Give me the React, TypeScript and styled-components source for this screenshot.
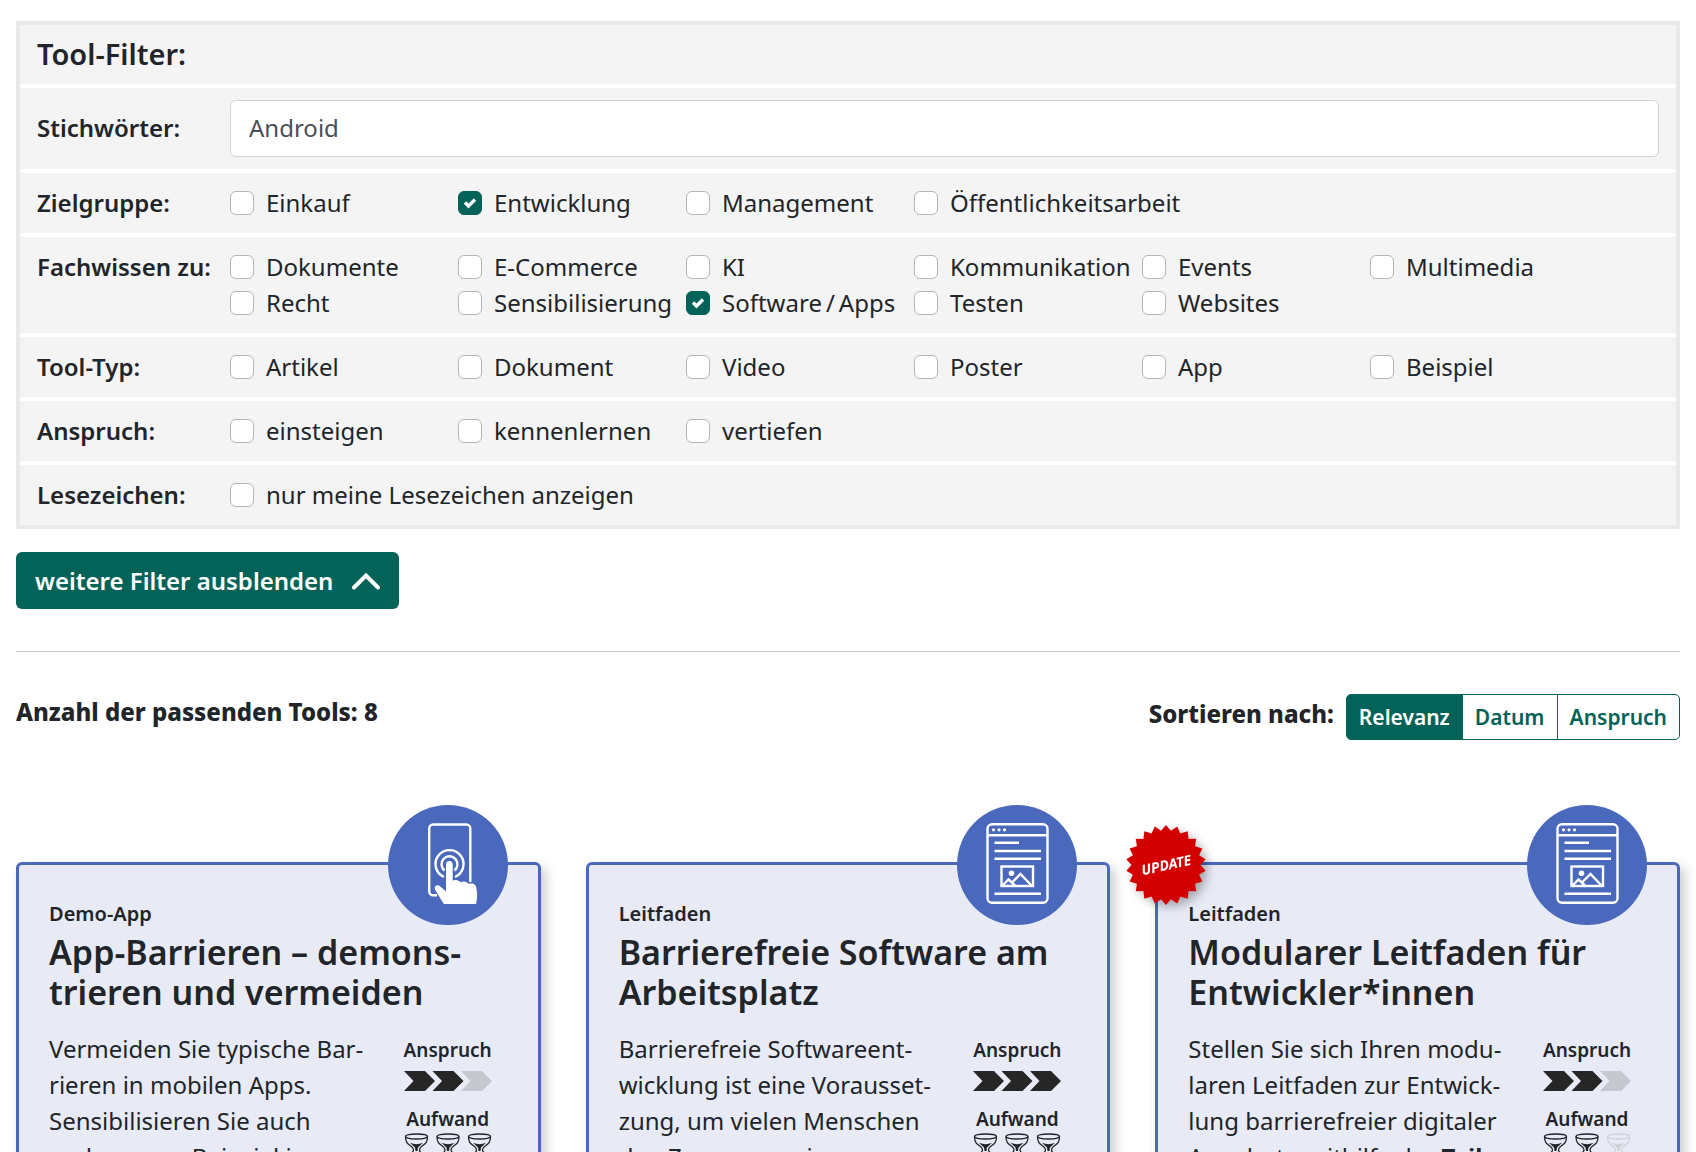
import React, { useState } from "react";
import styled, { createGlobalStyle } from "styled-components";

const green = "#046358";
const blue = "#4a69bd";
const ink = "#212529";

const GlobalStyle = createGlobalStyle`
  *, *::before, *::after { box-sizing: border-box; }
  body {
    margin: 0;
    background: #fff;
    color: ${ink};
    font-family: "Noto Sans", "Open Sans", sans-serif;
    font-size: 24px;
    line-height: 36px;
  }
  h2, h3, p { margin: 0; }
`;

const Page = styled.main`
  height: 100vh;
  overflow: hidden;
  padding: 21px 16px 0;
`;

const FilterPanel = styled.form`
  display: flex;
  flex-direction: column;
  gap: 4px;
  border: 4px solid #e9e9e9;
  background: #fff;
`;

const PanelTitle = styled.h2`
  padding: 11px 17px 12px;
  background: #f4f4f4;
  font-size: 29px;
  font-weight: 600;
`;

const FilterRow = styled.div`
  display: flex;
  align-items: flex-start;
  padding: 12px 17px;
  background: #f4f4f4;
`;

const RowLabel = styled.label`
  flex: 0 0 193px;
  align-self: center;
  padding-bottom: 2px;
  font-weight: 600;
`;

const GroupLabel = styled.span`
  flex: 0 0 193px;
  font-weight: 600;
  white-space: nowrap;
`;

const KeywordInput = styled.input`
  flex: 1;
  min-width: 0;
  height: 57px;
  padding: 0 18px 2px;
  border: 1px solid #ced4da;
  border-radius: 6px;
  background: #fff;
  color: #495057;
  font: inherit;
`;

const Options = styled.div`
  flex: 1;
  display: grid;
  grid-template-columns: repeat(auto-fill, 228px);
`;

const Option = styled.label<{ $wide?: boolean }>`
  display: flex;
  align-items: center;
  gap: 12px;
  white-space: nowrap;
  grid-column: ${(p) => (p.$wide ? "span 2" : "auto")};
`;

const CheckWrap = styled.span`
  display: grid;
  flex: none;
  & > * { grid-area: 1 / 1; }
  & > svg { pointer-events: none; place-self: center; }
`;

const CheckBox = styled.input`
  appearance: none;
  width: 24px;
  height: 24px;
  margin: 0;
  border: 1px solid #adb5bd;
  border-radius: 6px;
  background: #fff;
  &:checked {
    border-color: ${green};
    background: ${green};
  }
`;

const ToggleButton = styled.button`
  display: flex;
  align-items: center;
  gap: 19px;
  height: 57px;
  margin-top: 23px;
  padding: 0 19px;
  border: 0;
  border-radius: 6px;
  background: ${green};
  color: #fff;
  font: inherit;
  font-weight: 600;
`;

const Divider = styled.hr`
  height: 1px;
  margin: 42px 0;
  border: 0;
  background: #c4c6c8;
`;

const ResultBar = styled.div`
  display: flex;
  align-items: flex-start;
  justify-content: space-between;
  font-weight: 800;
`;

const SortArea = styled.div`
  display: flex;
  gap: 12px;
  line-height: 40px;
`;

const SortGroup = styled.div`
  display: flex;
`;

const SortButton = styled.button<{ $active: boolean }>`
  height: 46px;
  padding: 0 12px;
  border: 1px solid ${green};
  background: ${(p) => (p.$active ? green : "#fff")};
  color: ${(p) => (p.$active ? "#fff" : green)};
  font: inherit;
  font-size: 21px;
  font-weight: 600;
  & + & { margin-left: -1px; }
  &:first-child { border-radius: 5px 0 0 5px; }
  &:last-child { border-radius: 0 5px 5px 0; }
`;

const Cards = styled.div`
  display: grid;
  grid-template-columns: repeat(3, 1fr);
  gap: 45px;
  margin-top: 122px;
`;

const Card = styled.article`
  position: relative;
  min-height: 480px;
  padding: 30px;
  border: 3px solid ${blue};
  border-radius: 6px;
  background: #e8ebf6;
  box-shadow: 5px 5px 12px rgba(0, 0, 0, 0.2);
`;

const IconDisc = styled.div`
  position: absolute;
  top: -60px;
  right: 30px;
  width: 120px;
  height: 120px;
  border-radius: 50%;
  background: ${blue};
`;

const UpdateBadge = styled.div`
  position: absolute;
  top: -40px;
  left: -32px;
  display: grid;
  place-items: center;
  width: 80px;
  height: 80px;
  color: #fff;
  font-size: 14px;
  font-weight: 700;
  font-style: italic;
  filter: drop-shadow(4px 4px 5px rgba(0, 0, 0, 0.3));
  & > * { grid-area: 1 / 1; }
  & > span { transform: rotate(-12deg); }
`;

const Kind = styled.p`
  padding: 4px 0 3px;
  font-size: 20px;
  font-weight: 600;
  line-height: 30px;
`;

const CardTitle = styled.h3`
  margin-bottom: 19px;
  font-size: 34px;
  font-weight: 600;
  line-height: 40px;
`;

const CardBody = styled.div`
  display: flex;
  justify-content: space-between;
`;

const Teaser = styled.p`
  white-space: nowrap;
`;

const Ratings = styled.div`
  display: flex;
  flex-direction: column;
  align-items: center;
  width: 88px;
  margin-right: 16px;
  padding-top: 5px;
  font-size: 19px;
  font-weight: 600;
  line-height: 28px;
`;

const ChevronRow = styled.div`
  display: flex;
  padding: 7px 0 14px;
`;

function Check() {
  return (
    <svg width="14" height="12" viewBox="0 0 14 12" fill="none" stroke="#fff" strokeWidth="3.4">
      <path d="M2 5.5 5.5 9 12 2.5" />
    </svg>
  );
}

function ChevronUp() {
  return (
    <svg width="28" height="18" viewBox="0 0 28 18" fill="none" stroke="#fff" strokeWidth="4" strokeLinecap="round">
      <path d="M2 15.5 14 3.5 26 15.5" />
    </svg>
  );
}

function PhoneIcon() {
  return (
    <svg width="120" height="120" viewBox="0 0 120 120" fill="none" stroke="#fff" strokeWidth="2.4">
      <path d="M49 90.3H45.2a4 4 0 0 1-4-4V23.5a4 4 0 0 1 4-4H78.3a4 4 0 0 1 4 4V77" />
      <path d="M56 72A14 14 0 1 1 67 72" />
      <path d="M56.5 65.5A8 8 0 1 1 66.5 65.5" />
      <path fill="#fff" stroke="none" d="M55.8 99 47.5 85.5C45 81.5 49 78.8 52 81.2L58 86.5V59.5C58 54.9 64.7 54.9 64.7 59.5V75.5C67.5 74.5 70.5 75 72.5 77.2 75.5 76 78.5 76.5 80.5 78.8 85 77.5 88.3 79.5 88.3 83 89.6 88.5 89.3 94 88 99Z" />
    </svg>
  );
}

function DocumentIcon() {
  return (
    <svg width="120" height="120" viewBox="0 0 120 120" fill="none" stroke="#fff" strokeWidth="2.4">
      <rect x="30.5" y="19.3" width="60" height="78.5" rx="4.5" />
      <path d="M30 30.3H91M37.5 37.8H62M37.5 46H84M37.5 53.7H84M37.5 88.8H84" />
      <rect x="44.5" y="61.5" width="31.5" height="19.5" />
      <path d="M46 80 51.5 74.5 58 80.5M55 77.5 63.5 69 74.5 80.5" />
      <g fill="#fff" stroke="none">
        <circle cx="54.5" cy="68.3" r="2.8" />
        <circle cx="36.5" cy="24.8" r="1.6" />
        <circle cx="42" cy="24.8" r="1.6" />
        <circle cx="47.5" cy="24.8" r="1.6" />
      </g>
    </svg>
  );
}

function Seal() {
  const points = Array.from({ length: 44 }, (_, i) => {
    const r = i % 2 ? 34.5 : 40;
    const a = (i * Math.PI) / 22 - Math.PI / 2;
    return `${40 + r * Math.cos(a)},${40 + r * Math.sin(a)}`;
  }).join(" ");
  return (
    <svg width="80" height="80" viewBox="0 0 80 80">
      <polygon points={points} fill="#d30000" />
    </svg>
  );
}

function Chevrons({ level }: { level: number }) {
  return (
    <svg width="88" height="20" viewBox="0 0 88 20" role="img" aria-label={`${level} / 3`}>
      {[0, 1, 2].map((i) => (
        <path key={i} transform={`translate(${i * 28.5} 0)`} d="M0 0H21L31 10 21 20H0L9.5 10Z" fill={i < level ? "#262626" : "#c5c8cf"} />
      ))}
    </svg>
  );
}

function Hourglasses({ level }: { level: number }) {
  return (
    <svg width="88" height="36" viewBox="0 0 88 36" role="img" aria-label={`${level} / 3`}>
      {[0, 1, 2].map((i) => {
        const color = i < level ? ink : "#cfd1d8";
        return (
          <g key={i} transform={`translate(${i * 31.5} 0)`} fill="none" stroke={color} strokeWidth="1.3">
            <ellipse cx="12.5" cy="3.5" rx="11" ry="2.5" />
            <path d="M1.5 3.5C1.5 10 4 11 7.5 13.500 9.500 15 9.500 16 9.5 17.5S1.5 24 1.5 31.5M23.5 3.5C23.5 10 21 11 17.5 13.500 15.500 15 15.500 16 15.5 17.5S23.5 24 23.5 31.5" />
            <path d="M6 9.8Q12.500 12.500 19 9.8L14 14.500 13.500 18H11.5L11 14.500Z" fill={color} stroke="none" />
            <ellipse cx="12.5" cy="31.5" rx="11" ry="2.5" />
          </g>
        );
      })}
    </svg>
  );
}

const groups: { name: string; options: string[] }[] = [
  { name: "Zielgruppe:", options: ["Einkauf", "Entwicklung", "Management", "Öffentlichkeitsarbeit"] },
  {
    name: "Fachwissen zu:",
    options: ["Dokumente", "E-Commerce", "KI", "Kommunikation", "Events", "Multimedia", "Recht", "Sensibilisierung", "Software\u2009/\u2009Apps", "Testen", "Websites"],
  },
  { name: "Tool-Typ:", options: ["Artikel", "Dokument", "Video", "Poster", "App", "Beispiel"] },
  { name: "Anspruch:", options: ["einsteigen", "kennenlernen", "vertiefen"] },
  { name: "Lesezeichen:", options: ["nur meine Lesezeichen anzeigen"] },
];

const tools = [
  {
    kind: "Demo-App",
    title: ["App-Barrieren – demons-", "trieren und vermeiden"],
    text: ["Vermeiden Sie typische Bar-", "rieren in mobilen Apps.", "Sensibilisieren Sie auch", "anderen am Beispiel in"],
    bold: "",
    icon: <PhoneIcon />,
    level: 2,
    effort: 3,
    updated: false,
  },
  {
    kind: "Leitfaden",
    title: ["Barrierefreie Software am", "Arbeitsplatz"],
    text: ["Barrierefreie Softwareent-", "wicklung ist eine Vorausset-", "zung, um vielen Menschen", "den Zugang zu einer"],
    bold: "",
    icon: <DocumentIcon />,
    level: 3,
    effort: 3,
    updated: false,
  },
  {
    kind: "Leitfaden",
    title: ["Modularer Leitfaden für", "Entwickler*innen"],
    text: ["Stellen Sie sich Ihren modu-", "laren Leitfaden zur Entwick-", "lung barrierefreier digitaler", "Angebote mithilfe der "],
    bold: "Teil-",
    icon: <DocumentIcon />,
    level: 2,
    effort: 2,
    updated: true,
  },
];

function Lines({ lines }: { lines: string[] }) {
  return (
    <>
      {lines.map((line, i) => (
        <React.Fragment key={line}>
          {i > 0 && <br />}
          {line}
        </React.Fragment>
      ))}
    </>
  );
}

export default function App() {
  const [checked, setChecked] = useState<string[]>(["Entwicklung", "Software\u2009/\u2009Apps"]);
  const [sort, setSort] = useState("Relevanz");
  const toggle = (name: string) =>
    setChecked((list) => (list.includes(name) ? list.filter((n) => n !== name) : [...list, name]));

  return (
    <Page>
      <GlobalStyle />
      <FilterPanel>
        <PanelTitle>Tool-Filter:</PanelTitle>
        <FilterRow>
          <RowLabel htmlFor="keywords">Stichwörter:</RowLabel>
          <KeywordInput id="keywords" type="text" defaultValue="Android" />
        </FilterRow>
        {groups.map((group) => (
          <FilterRow key={group.name} role="group" aria-label={group.name}>
            <GroupLabel>{group.name}</GroupLabel>
            <Options>
              {group.options.map((option) => (
                <Option key={option} $wide={option.length > 20}>
                  <CheckWrap>
                    <CheckBox type="checkbox" checked={checked.includes(option)} onChange={() => toggle(option)} />
                    {checked.includes(option) && <Check />}
                  </CheckWrap>
                  {option}
                </Option>
              ))}
            </Options>
          </FilterRow>
        ))}
      </FilterPanel>
      <ToggleButton type="button">
        weitere Filter ausblenden
        <ChevronUp />
      </ToggleButton>
      <Divider />
      <ResultBar>
        <p>Anzahl der passenden Tools: 8</p>
        <SortArea>
          <span>Sortieren nach:</span>
          <SortGroup>
            {["Relevanz", "Datum", "Anspruch"].map((name) => (
              <SortButton key={name} type="button" $active={sort === name} onClick={() => setSort(name)}>
                {name}
              </SortButton>
            ))}
          </SortGroup>
        </SortArea>
      </ResultBar>
      <Cards>
        {tools.map((tool) => (
          <Card key={tool.title[0]}>
            <IconDisc>{tool.icon}</IconDisc>
            {tool.updated && (
              <UpdateBadge>
                <Seal />
                <span>UPDATE</span>
              </UpdateBadge>
            )}
            <Kind>{tool.kind}</Kind>
            <CardTitle>
              <Lines lines={tool.title} />
            </CardTitle>
            <CardBody>
              <Teaser>
                <Lines lines={tool.text} />
                {tool.bold && <b>{tool.bold}</b>}
              </Teaser>
              <Ratings>
                <span>Anspruch</span>
                <ChevronRow>
                  <Chevrons level={tool.level} />
                </ChevronRow>
                <span>Aufwand</span>
                <Hourglasses level={tool.effort} />
              </Ratings>
            </CardBody>
          </Card>
        ))}
      </Cards>
    </Page>
  );
}
